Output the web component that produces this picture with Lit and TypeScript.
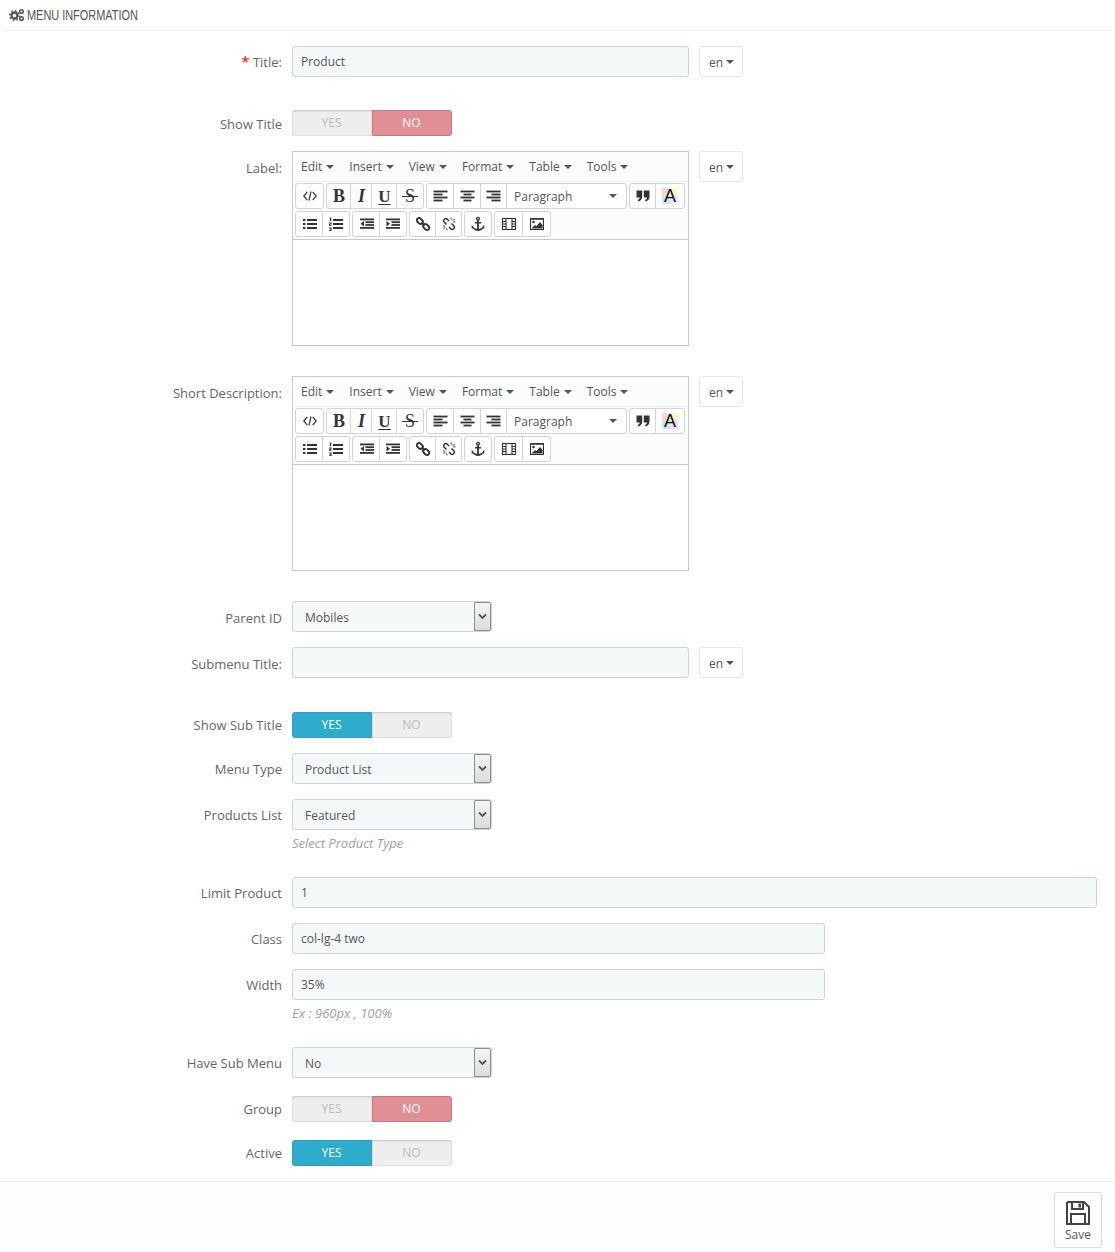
import { LitElement, html, css, svg } from "lit";
import { customElement } from "lit/decorators.js";

const ic = (body: unknown, size = 16) => html`<svg class="ic" width=${size} height=${size} viewBox="0 0 16 16" fill="#333">${body}</svg>`;
const lines = (rows: [number, number][]) => rows.map(([x, w], i) => svg`<rect x=${x} y=${2.6 + i * 3} width=${w} height="1.8"/>`);
const listLines = svg`<rect x="5" y="3" width="10" height="2"/><rect x="5" y="7" width="10" height="2"/><rect x="5" y="11" width="10" height="2"/>`;

const icons: Record<string, unknown> = {
  code: ic(svg`<path d="M5.300 3.800 1.800 8l3.500 4.200M10.700 3.800 14.200 8l-3.500 4.200M9 3.500 7 12.500" fill="none" stroke="#333" stroke-width="1.200"/>`),
  b: html`<span class="glyph b">B</span>`,
  i: html`<span class="glyph i">I</span>`,
  u: html`<span class="glyph u">U</span>`,
  s: html`<span class="glyph s">S</span>`,
  left: ic(lines([[0.5, 14], [0.5, 9], [0.5, 14], [0.5, 9]])),
  center: ic(lines([[0.5, 14], [3.5, 8], [0.5, 14], [3.5, 8]])),
  right: ic(lines([[0.5, 14], [5.5, 9], [0.5, 14], [5.5, 9]])),
  quote: ic(svg`<path d="M1.500 2.500h5.700v6c0 2.700-1.400 4.300-3.900 5l-.6-1.500c1.300-.5 1.900-1.300 2-2.500H1.500zM8.800 2.500h5.700v6c0 2.700-1.400 4.300-3.900 5l-.6-1.500c1.300-.5 1.900-1.300 2-2.500H8.800z"/>`),
  color: html`<span class="color"><i class="c1"></i><i class="c2"></i><i class="c3"></i><i class="c4"></i><i class="c5"></i><b>A</b></span>`,
  ul: ic(svg`<rect x="1" y="3" width="2.400" height="2"/><rect x="1" y="7" width="2.400" height="2"/><rect x="1" y="11" width="2.400" height="2"/>${listLines}`),
  ol: ic(svg`<rect x="1.800" y="1.500" width="1.400" height="3.500"/><path d="M1 6.500h2.600v1.700H2.200v.6h1.400v.9H1V8h1.400v-.6H1zM1 11.500h2.600V15H1v-.8h1.500v-.6H1.500v-.6h1v-.6H1z"/>${listLines}`),
  outdent: ic(svg`<rect x="1" y="2.500" width="14" height="1.800"/><rect x="6.500" y="5.300" width="8.500" height="1.800"/><rect x="6.500" y="8.100" width="8.500" height="1.800"/><rect x="1" y="11" width="14" height="1.800"/><path d="M5 5v5.500L1.500 7.700z"/>`),
  indent: ic(svg`<rect x="1" y="2.500" width="14" height="1.800"/><rect x="6.500" y="5.300" width="8.500" height="1.800"/><rect x="6.500" y="8.100" width="8.500" height="1.800"/><rect x="1" y="11" width="14" height="1.800"/><path d="M1.500 5v5.500L5 7.700z"/>`),
  link: ic(svg`<g fill="none" stroke="#333" stroke-width="1.900"><rect x="1.500" y="2.800" width="6.600" height="4.400" rx="2.200" transform="rotate(45 4.800 5)"/><rect x="7.900" y="8.800" width="6.600" height="4.400" rx="2.200" transform="rotate(45 11.200 11)"/><path d="M6.500 6.500l3 3"/></g>`),
  unlink: ic(svg`<g fill="none" stroke="#333"><path stroke-width="1.500" d="M8 5 6 3Q5 2 3.800 3L3 3.800Q2 5 3 6l2.500 2.500M8 11l2 2q1 1 2.200 0l.8-.8q1-1.200 0-2.200l-2.500-2.500"/><path stroke-width=".9" d="M10 1.500l.4 2.300M14 3.500l-2.300.8M14.500 6l-2.300-.2M2 10l2.300.2M2.500 12.500l2-.8M6 14.500l-.4-2.300"/></g>`),
  anchor: ic(svg`<circle cx="8" cy="2.800" r="1.400" fill="none" stroke="#333" stroke-width="1.300"/><rect x="7.100" y="4" width="1.800" height="9.500"/><rect x="5" y="6" width="6" height="1.500"/><path d="M1.500 9l1.300 1 .2.500C3.700 12 5.700 13 8 13s4.300-1 5-2.500l.2-.5 1.300-1-.4 4-.9-.8C11.700 14 10 15 8 15s-3.700-1-5.200-2.800l-.9.800z"/>`),
  media: ic(svg`<g fill="none" stroke="#333" stroke-width="1.100"><rect x="1.500" y="2.500" width="13" height="11"/><path d="M5 2.500v11M11 2.500v11M1.500 5.500H5M1.500 8H5M1.500 10.500H5M11 5.500h3.500M11 8h3.500M11 10.500h3.500"/></g>`),
  image: ic(svg`<path fill-rule="evenodd" d="M1 2h14v12H1zM2.100 3.800v9.100h11.800V3.800z"/><circle cx="4.500" cy="6" r="1.300"/><path d="M2.500 12.500 6 9l1.300 1.200L11 6l2.500 3v3.500z"/>`),
};

const menus = ["Edit", "Insert", "View", "Format", "Table", "Tools"];
type Btn = [string, number];
const row1: Btn[][] = [
  [["code", 27]],
  [["b", 24], ["i", 22], ["u", 26], ["s", 27]],
  [["left", 27], ["center", 28], ["right", 27], ["para", 120]],
  [["quote", 26], ["color", 29]],
];
const row2: Btn[][] = [
  [["ul", 27], ["ol", 27]],
  [["outdent", 27], ["indent", 27]],
  [["link", 26], ["unlink", 26]],
  [["anchor", 26]],
  [["media", 28], ["image", 28]],
];

@customElement("app-root")
export class AppRoot extends LitElement {
  static styles = css`
    :host { display: block; width: 1115px; height: 1252px; background: #fff; font-family: "Open Sans", sans-serif; font-size: 13px; color: #666; overflow: hidden; }
    * { box-sizing: border-box; }
    .head { height: 31px; margin: 0 3px 15px 4px; padding: 0 5px; border-bottom: 1px solid #eef0f1; display: flex; align-items: center; gap: 2px; color: #555; }
    .head span { font-family: "Liberation Sans", sans-serif; font-size: 14px; text-transform: uppercase; display: inline-block; white-space: nowrap; transform: scaleX(.78); transform-origin: left center; }
    .row { display: grid; grid-template-columns: 282px 1fr; column-gap: 10px; align-items: start; margin-bottom: 15px; }
    .lbl { text-align: right; line-height: 20px; padding-top: 6px; white-space: nowrap; }
    .lbl.p3 { padding-top: 3px; } .lbl.p4 { padding-top: 4px; } .lbl.p7 { padding-top: 7px; }
    .lbl em { font-style: normal; color: #e00; font-size: 15px; line-height: 0; }
    .tr { margin-bottom: 33px; }
    .trs { margin-bottom: 34px; }
    .ed { margin-bottom: 30px; }
    .tg { margin-bottom: 18px; }
    .ctl { display: flex; gap: 10px; align-items: flex-start; }
    input { display: block; height: 31px; border: 1px solid #c7d6db; border-radius: 3px; background: #f5f8f9; padding: 0 8px 1px; font: inherit; font-size: 12px; color: #555; outline: none; }
    .w397 { width: 397px; } .w805 { width: 805px; } .w533 { width: 533px; }
    .lang { width: 44px; height: 31px; border: 1px solid #e4e8ea; border-radius: 3px; background: #fff; display: flex; align-items: center; justify-content: center; gap: 3px; color: #555; font-size: 12px; padding: 1px 0 0 1px; }
    .car { width: 0; height: 0; border: 4px solid transparent; border-top-color: #555; border-bottom: 0; display: inline-block; }
    .toggle { display: flex; width: 160px; height: 26px; font-size: 12px; line-height: 25px; text-align: center; }
    .toggle span { width: 80px; background: #eee; color: #bbb; padding-right: 1px; box-shadow: inset 0 1px 2px rgba(0,0,0,.18), inset 0 -1px 1px rgba(0,0,0,.06); }
    .toggle span:first-child { border-radius: 3px 0 0 3px; }
    .toggle span:last-child { border-radius: 0 3px 3px 0; }
    .toggle .yes { background: #2eacce; border: 1px solid #2a9fc0; color: #fff; line-height: 23px; border-radius: 3px; box-shadow: none; }
    .toggle .no { background: #e08f95; border: 1px solid #c9767c; color: #fff; line-height: 23px; border-radius: 3px; box-shadow: none; }
    .sel { width: 200px; height: 31px; border: 1px solid #c7d6db; border-radius: 3px; background: #f5f8f9; display: flex; align-items: stretch; color: #555; font-size: 12px; }
    .sel span { flex: 1; padding: 0 12px; line-height: 31px; }
    .sel b { width: 17px; background: linear-gradient(#f4f4f4, #dcdcdc); border: 1px solid #8f8f8f; border-radius: 0 2px 2px 0; display: flex; align-items: center; justify-content: center; }
    .help { font-size: 13px; font-style: italic; color: #9aa3a8; margin-top: 4px; line-height: 18px; }
    .r2 { margin-bottom: 25px; }
    .editor { width: 397px; height: 195px; border: 1px solid #c9c9c9; display: flex; flex-direction: column; background: #fff; }
    .bars { background: #fbfcfe; border-bottom: 1px solid #c9c9c9; }
    .menubar { height: 30px; display: flex; padding-left: 8px; gap: 15px; align-items: center; border-bottom: 1px solid #eceef0; color: #555; font-size: 12px; }
    .menubar span { display: flex; align-items: center; gap: 4px; }
    .tb { display: flex; gap: 2px; padding: 1px 0 0 2px; height: 28px; }
    .tb + .tb { height: 29px; }
    .grp { display: flex; height: 26px; border: 1px solid #d4d4d4; border-radius: 3px; background: #fff; }
    .btn { display: flex; align-items: center; justify-content: center; border-left: 1px solid #d4d4d4; margin-left: -1px; }
    .btn:first-child { border-left: 0; margin-left: 0; }
    .para { justify-content: space-between; padding: 0 9px 0 7px; color: #555; font-size: 12px; }
    .ic { display: block; }
    .glyph { font-family: "Liberation Serif", serif; font-size: 18px; color: #333; line-height: 1; position: relative; }
    .glyph.b { font-weight: 700; } .glyph.i { font-style: italic; font-weight: 700; }
    .glyph.u { font-size: 17px; font-weight: 700; text-decoration: underline; text-decoration-thickness: 1px; text-underline-offset: 2px; }
    .glyph.s::after { content: ""; position: absolute; left: -3px; right: -3px; top: 9px; height: 1px; background: #333; }
    .color { position: relative; display: block; width: 16px; height: 16px; }
    .color i { position: absolute; width: 8px; height: 8px; }
    .color .c1 { left: 0; top: 0; background: #fbd5d5; }
    .color .c2 { right: 0; top: 0; background: #fdf6c5; }
    .color .c3 { left: 0; bottom: 0; background: #c9e6f7; }
    .color .c4 { right: 0; bottom: 0; background: #f9dcf5; }
    .color .c5 { left: 5px; top: 5px; width: 6px; height: 6px; background: #d5f5e0; }
    .color b { position: absolute; inset: 0; text-align: center; font: 400 18px/17px "Liberation Sans", sans-serif; color: #111; }
    .foot { border-top: 1px solid #eef0f1; background: #fcfdfe; height: 71px; padding: 10px 13px 0 0; display: flex; justify-content: flex-end; }
    .save { width: 48px; height: 56px; border: 1px solid #ddd; border-radius: 3px; background: #fff; display: flex; flex-direction: column; align-items: center; padding-top: 8px; gap: 2px; font-size: 12px; color: #555; line-height: 16px; }
  `;

  private lang() { return html`<div class="lang">en <span class="car"></span></div>`; }
  private toggle(yes: boolean) {
    return html`<div class="toggle"><span class=${yes ? "yes" : ""}>YES</span><span class=${yes ? "" : "no"}>NO</span></div>`;
  }
  private select(v: string) {
    return html`<div class="sel"><span>${v}</span><b><svg width="9" height="7" viewBox="0 0 9 7"><path d="M1 1.500 4.500 5 8 1.500" fill="none" stroke="#555" stroke-width="1.800"/></svg></b></div>`;
  }
  private tb(groups: Btn[][]) {
    return html`<div class="tb">${groups.map((g) => html`<div class="grp">${g.map(([n, w]) =>
      n === "para"
        ? html`<div class="btn para" style="width:${w}px"><span>Paragraph</span><span class="car"></span></div>`
        : html`<div class="btn" style="width:${w}px">${icons[n]}</div>`)}</div>`)}</div>`;
  }
  private editor() {
    return html`<div class="editor"><div class="bars">
      <div class="menubar">${menus.map((m) => html`<span>${m} <i class="car"></i></span>`)}</div>
      ${this.tb(row1)}${this.tb(row2)}
    </div></div>`;
  }

  render() {
    return html`
      <div class="head">
        <svg width="16" height="14" viewBox="0 0 16 14" fill="none" stroke="#555"><circle cx="5.500" cy="7.500" r="3" stroke-width="2.400"/><circle cx="5.500" cy="7.500" r="4.900" stroke-width="1.300" stroke-dasharray="1.800 2"/><circle cx="12.500" cy="3.500" r="1.800" stroke-width="1.500"/><circle cx="12.500" cy="10.500" r="1.800" stroke-width="1.500"/></svg>
        <span>Menu Information</span>
      </div>
      <div class="row tr"><div class="lbl"><em>*</em> Title:</div><div class="ctl"><input class="w397" .value=${"Product"} />${this.lang()}</div></div>
      <div class="row"><div class="lbl p4">Show Title</div>${this.toggle(false)}</div>
      <div class="row ed"><div class="lbl p7">Label:</div><div class="ctl">${this.editor()}${this.lang()}</div></div>
      <div class="row ed"><div class="lbl p7">Short Description:</div><div class="ctl">${this.editor()}${this.lang()}</div></div>
      <div class="row"><div class="lbl p7">Parent ID</div>${this.select("Mobiles")}</div>
      <div class="row trs"><div class="lbl p7">Submenu Title:</div><div class="ctl"><input class="w397" />${this.lang()}</div></div>
      <div class="row"><div class="lbl p3">Show Sub Title</div>${this.toggle(true)}</div>
      <div class="row"><div class="lbl">Menu Type</div>${this.select("Product List")}</div>
      <div class="row r2"><div class="lbl">Products List</div><div>${this.select("Featured")}<div class="help">Select Product Type</div></div></div>
      <div class="row"><div class="lbl">Limit Product</div><input class="w805" .value=${"1"} /></div>
      <div class="row"><div class="lbl">Class</div><input class="w533" .value=${"col-lg-4 two"} /></div>
      <div class="row r2"><div class="lbl">Width</div><div><input class="w533" .value=${"35%"} /><div class="help">Ex : 960px , 100%</div></div></div>
      <div class="row tg"><div class="lbl">Have Sub Menu</div>${this.select("No")}</div>
      <div class="row tg"><div class="lbl p3">Group</div>${this.toggle(false)}</div>
      <div class="row"><div class="lbl p3">Active</div>${this.toggle(true)}</div>
      <div class="foot"><div class="save">
        <svg width="24" height="24" viewBox="0 0 24 24" fill="none" stroke="#444" stroke-width="2"><path d="M2 1h16l5 5v17H1V2zM6 1v7h11V1M5 22v-9h14v9"/><rect x="12.500" y="2.500" width="2.500" height="4" fill="#444" stroke="none"/></svg>
        <span>Save</span>
      </div></div>
    `;
  }
}
